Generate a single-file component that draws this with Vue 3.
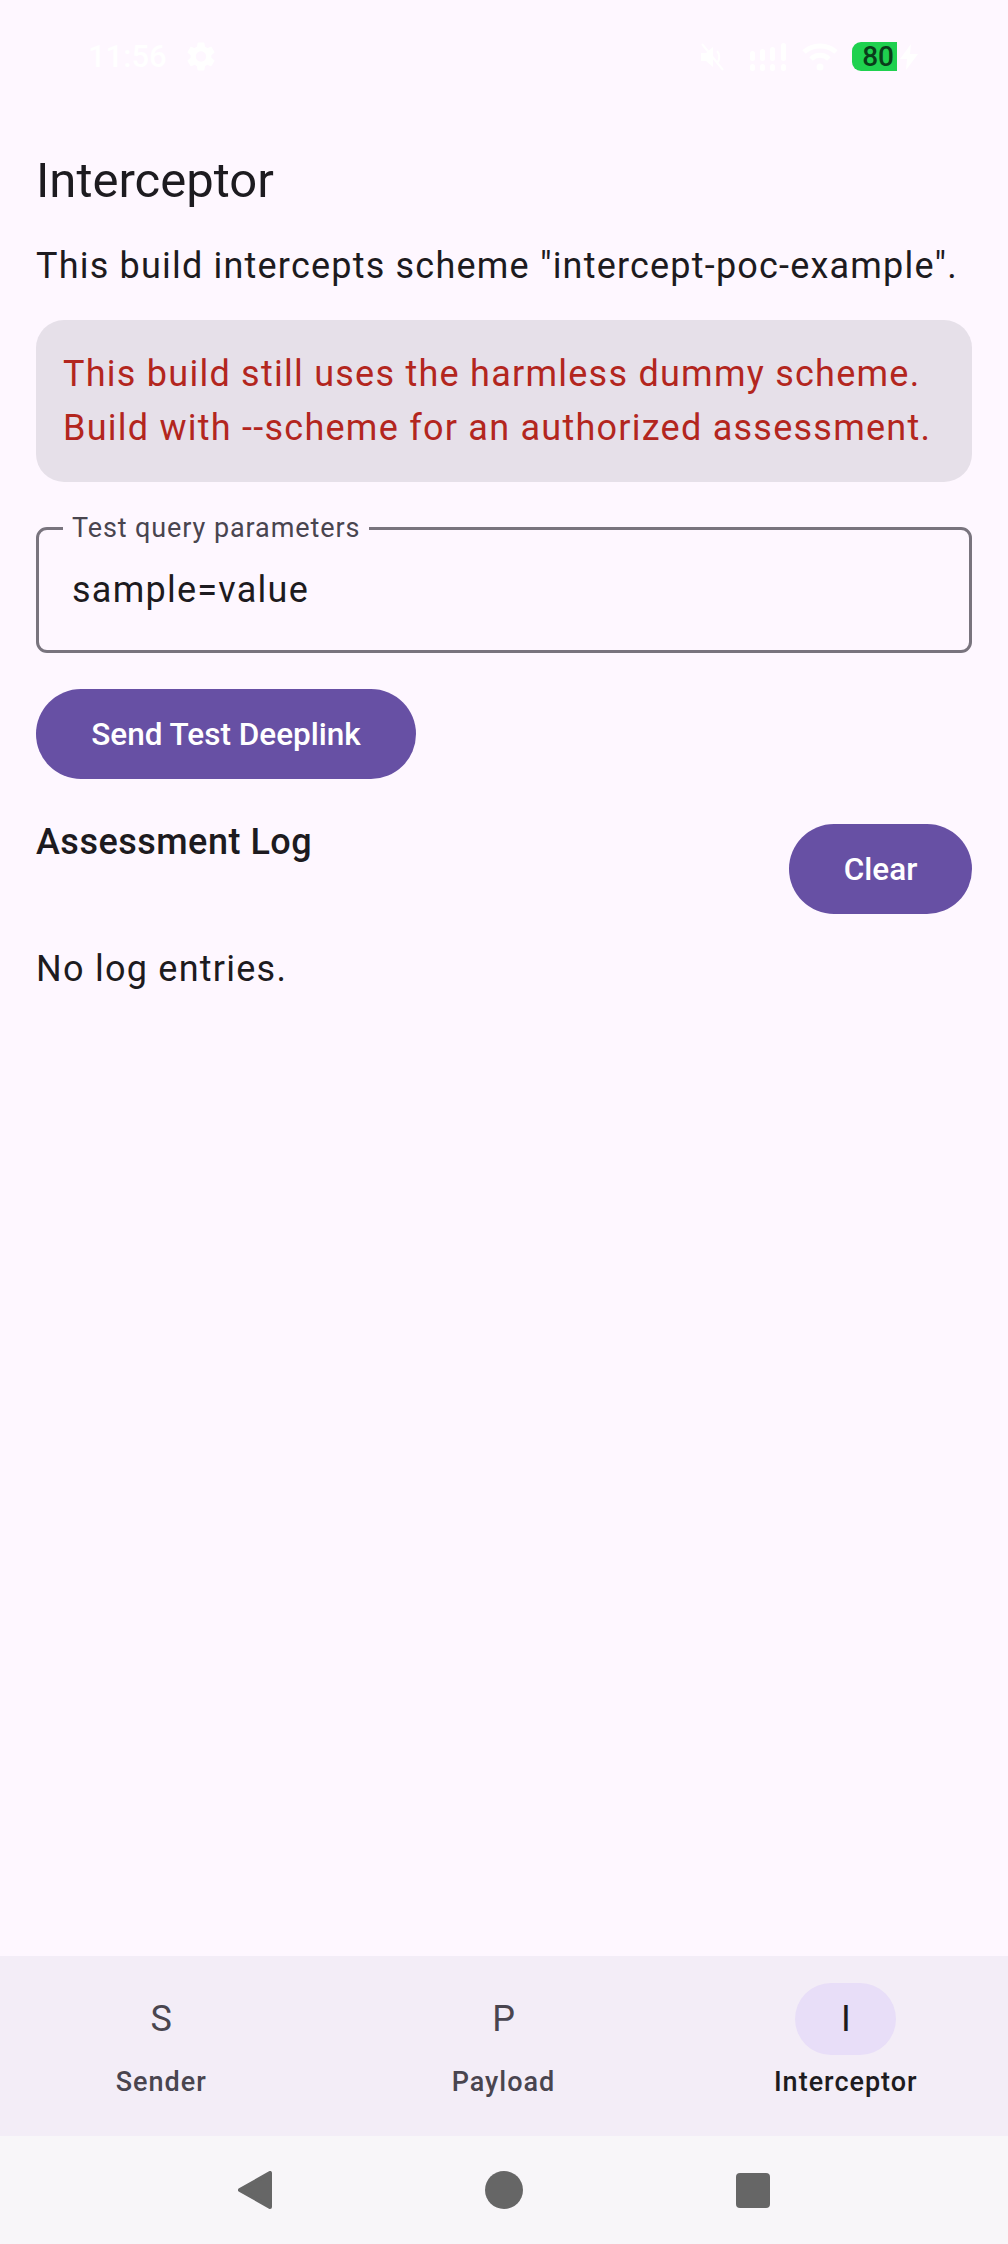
<template>
  <div class="screen">
    <!-- Status bar -->
    <div class="status-bar">
      <span class="clock">11:56</span>
      <svg class="gear" width="28" height="29" viewBox="2.500 2 19 20">
        <path fill="#fff" d="M19.14 12.94c.04-.3.06-.61.06-.94 0-.32-.02-.64-.07-.94l2.030-1.580c.18-.14.23-.41.12-.61l-1.920-3.320c-.12-.22-.37-.29-.59-.22l-2.390.96c-.5-.38-1.030-.7-1.620-.94l-.36-2.540c-.04-.24-.24-.41-.48-.41h-3.840c-.24 0-.43.17-.47.41l-.36 2.540c-.59.24-1.130.57-1.620.94l-2.390-.96c-.22-.08-.47 0-.59.22L2.740 8.870c-.12.21-.08.47.12.61l2.030 1.580c-.05.3-.09.63-.09.94s.02.64.07.94l-2.030 1.580c-.18.14-.23.41-.12.61l1.920 3.320c.12.22.37.29.59.22l2.390-.96c.5.38 1.030.7 1.620.94l.36 2.540c.05.24.24.41.48.41h3.840c.24 0 .44-.17.47-.41l.36-2.540c.59-.24 1.130-.56 1.620-.94l2.390.96c.22.08.47 0 .59-.22l1.920-3.320c.12-.22.07-.47-.12-.61l-2.010-1.580zM12 15.600c-1.980 0-3.600-1.620-3.600-3.600s1.620-3.600 3.600-3.600 3.600 1.620 3.600 3.600-1.620 3.600-3.600 3.600z" />
      </svg>
      <div class="status-right">
        <svg class="mute" width="28" height="28" viewBox="0 0 28 28">
          <path fill="#fff" d="M2 10h5l7-6v20l-7-6H2z" />
          <path fill="none" stroke="#fff" stroke-width="2" d="M18 8c3 3 3 9 0 12M3 1l21 26" />
        </svg>
        <svg class="signal" width="36" height="28" viewBox="0 0 36 28">
          <g fill="#fff">
            <rect x="0" y="8" width="5" height="10" rx="2.500" />
            <rect x="10" y="6" width="5" height="12" rx="2.500" />
            <rect x="20" y="4" width="5" height="14" rx="2.500" />
            <rect x="31" y="0" width="5" height="18" rx="2.500" />
            <rect x="0" y="21" width="5" height="7" rx="2.500" />
            <rect x="10" y="21" width="5" height="7" rx="2.500" />
            <rect x="20" y="21" width="5" height="7" rx="2.500" />
            <rect x="31" y="21" width="5" height="7" rx="2.500" />
          </g>
        </svg>
        <svg class="wifi" width="36" height="28" viewBox="0 0 36 28">
          <path fill="none" stroke="#fff" stroke-width="5" d="M2 9c9-8 23-8 32 0M9 16c5-5 13-5 18 0" />
          <circle cx="18" cy="24" r="3.500" fill="#fff" />
        </svg>
        <span class="battery">80</span>
        <svg class="bolt" width="22" height="28" viewBox="0 0 22 28">
          <path fill="#fff" d="M13 1 2 16h7l-1 11 12-16h-8z" />
        </svg>
      </div>
    </div>

    <!-- Screen content -->
    <main class="content">
      <h1 class="title">Interceptor</h1>
      <p class="intro">This build intercepts scheme "intercept-poc-example".</p>

      <div class="warning">
        <p>This build still uses the harmless dummy scheme.</p>
        <p>Build with --scheme for an authorized assessment.</p>
      </div>

      <div class="field">
        <span class="field-label">Test query parameters</span>
        <span class="field-value">{{ query }}</span>
      </div>

      <button class="btn send">Send Test Deeplink</button>

      <div class="log-head">
        <h2 class="log-title">Assessment Log</h2>
        <button class="btn clear">Clear</button>
      </div>

      <p class="log-empty">No log entries.</p>
    </main>

    <!-- Bottom navigation -->
    <nav class="tabs">
      <div v-for="tab in tabs" :key="tab.label" class="tab" :class="{ active: tab.active }">
        <div class="tab-pill">{{ tab.letter }}</div>
        <div class="tab-label">{{ tab.label }}</div>
      </div>
    </nav>

    <!-- System navigation -->
    <div class="system-nav">
      <svg width="34" height="38" viewBox="0 0 34 38">
        <path fill="#666" stroke="#666" stroke-width="4" stroke-linejoin="round" d="M32 2v34L2 19z" />
      </svg>
      <svg width="38" height="38" viewBox="0 0 38 38">
        <circle cx="19" cy="19" r="19" fill="#666" />
      </svg>
      <svg width="34" height="35" viewBox="0 0 34 35">
        <rect width="34" height="35" rx="4" fill="#666" />
      </svg>
    </div>
  </div>
</template>

<script setup>
const query = 'sample=value'

const tabs = [
  { letter: 'S', label: 'Sender', active: false },
  { letter: 'P', label: 'Payload', active: false },
  { letter: 'I', label: 'Interceptor', active: true }
]
</script>

<style>
html,
body {
  margin: 0;
  background: #fef7ff;
}
</style>

<style scoped>
.screen {
  display: flex;
  flex-direction: column;
  height: 2244px;
  font-family: Roboto, "Liberation Sans", sans-serif;
  color: #1d1b20;
  background: #fef7ff;
}

.status-bar {
  display: flex;
  align-items: center;
  flex: none;
  height: 113px;
  padding: 0 88px;
  box-sizing: border-box;
}

.clock {
  font-size: 31px;
  font-weight: 500;
  color: #fff;
}

.gear {
  margin-left: 20px;
}

.status-right {
  display: flex;
  align-items: center;
  margin-left: auto;
}

.signal {
  margin-left: 23px;
}

.wifi {
  margin-left: 16px;
}

.battery {
  width: 45px;
  height: 29px;
  margin-left: 14px;
  padding-right: 3px;
  box-sizing: border-box;
  text-align: right;
  font-size: 28px;
  line-height: 29px;
  font-weight: 500;
  color: #0a3d1a;
  background: #1fd14f;
  border-radius: 9px 0 0 9px;
}

.bolt {
  margin-left: 1px;
}

.content {
  flex: 1;
  display: flex;
  flex-direction: column;
  align-items: flex-start;
  padding: 0 36px;
}

.title {
  margin: 36px 0 0;
  font-size: 49px;
  line-height: 64px;
  font-weight: 400;
}

.intro {
  margin: 26px 0 0;
  font-size: 36px;
  line-height: 54px;
  letter-spacing: 1.2px;
}

.warning {
  align-self: stretch;
  margin-top: 27px;
  padding: 27px;
  background: #e6e0e9;
  border-radius: 28px;
  color: #b3261e;
  font-size: 36px;
  line-height: 54px;
  letter-spacing: 1.25px;
}

.warning p {
  margin: 0;
}

.field {
  position: relative;
  align-self: stretch;
  box-sizing: border-box;
  height: 126px;
  margin-top: 45px;
  padding: 0 33px;
  display: flex;
  align-items: center;
  border: 3px solid #79747e;
  border-radius: 11px;
}

.field-label {
  position: absolute;
  top: -17px;
  left: 24px;
  padding: 0 9px;
  font-size: 27px;
  line-height: 30px;
  letter-spacing: 0.9px;
  color: #49454f;
  background: #fef7ff;
}

.field-value {
  font-size: 36px;
  letter-spacing: 1.25px;
}

.btn {
  border: 0;
  height: 90px;
  border-radius: 45px;
  background: #6750a4;
  color: #fff;
  font-family: inherit;
  font-size: 31.500px;
  font-weight: 500;
  letter-spacing: 0;
}

.send {
  width: 380px;
  margin-top: 36px;
}

.log-head {
  align-self: stretch;
  display: flex;
  justify-content: space-between;
  align-items: flex-start;
  margin-top: 45px;
}

.log-title {
  margin: 0;
  font-size: 36px;
  line-height: 36px;
  font-weight: 500;
  letter-spacing: 0.5px;
}

.clear {
  width: 183px;
}

.log-empty {
  margin: 28px 0 0;
  font-size: 36px;
  line-height: 54px;
  letter-spacing: 1.25px;
}

.tabs {
  flex: none;
  display: flex;
  gap: 20px;
  height: 180px;
  padding: 27px 1px 0 0;
  box-sizing: border-box;
  background: #f3edf7;
}

.tab {
  flex: 1;
  display: flex;
  flex-direction: column;
  align-items: center;
  color: #49454f;
}

.tab-pill {
  width: 101px;
  height: 72px;
  border-radius: 36px;
  font-size: 36px;
  line-height: 72px;
  text-align: center;
}

.tab-label {
  margin-top: 9px;
  font-size: 27px;
  line-height: 36px;
  font-weight: 500;
  letter-spacing: 1px;
}

.tab.active {
  color: #1d1b20;
}

.tab.active .tab-pill {
  background: #e8def8;
}

.system-nav {
  flex: none;
  display: flex;
  align-items: center;
  justify-content: center;
  gap: 213px;
  height: 108px;
  padding-right: 1px;
  box-sizing: border-box;
  background: #f8f6f9;
}
</style>
